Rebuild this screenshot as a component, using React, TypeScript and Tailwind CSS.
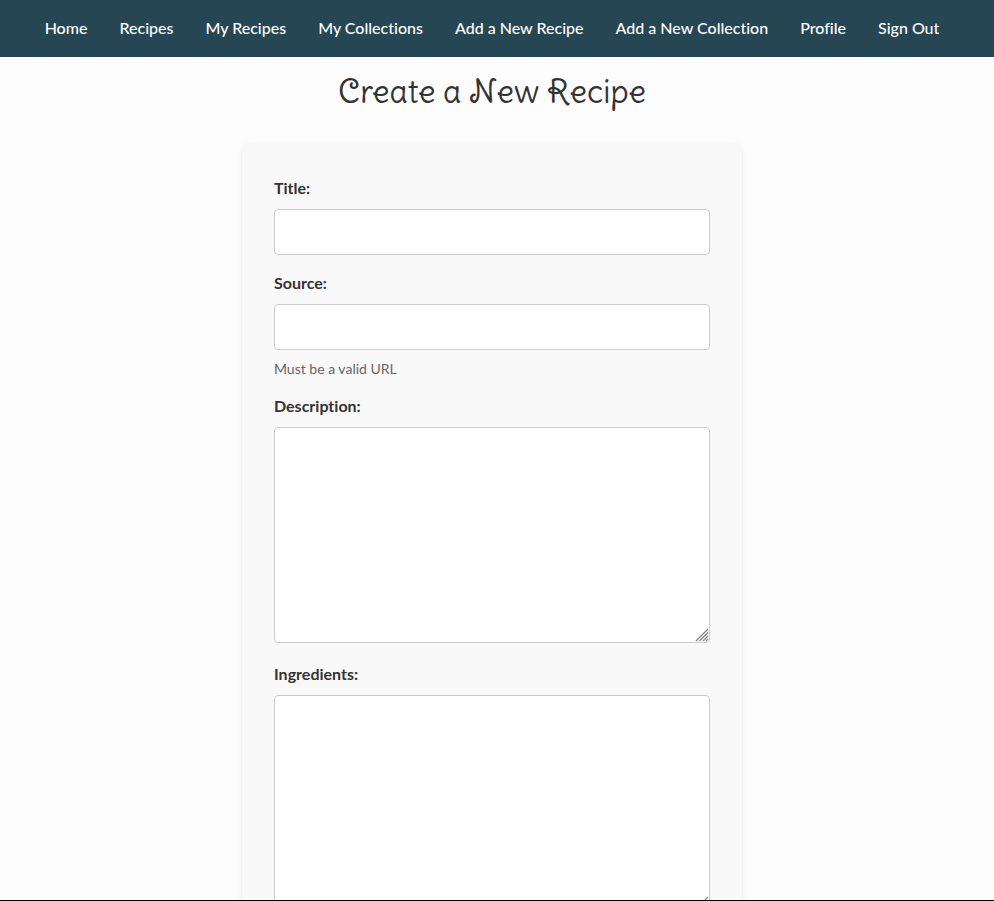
const links = [
  "Home",
  "Recipes",
  "My Recipes",
  "My Collections",
  "Add a New Recipe",
  "Add a New Collection",
  "Profile",
  "Sign Out",
];

const control =
  "block w-full rounded border border-[#ccc] bg-white px-3 text-base outline-none";

const labelText = "mb-2 block leading-[27px] font-bold";

function ResizeGrip() {
  return (
    <svg
      aria-hidden="true"
      className="pointer-events-none absolute right-px bottom-px size-[14px]"
      viewBox="0 0 14 14"
      fill="none"
      stroke="#858585"
      strokeWidth="1.2"
    >
      <path d="M1 13 13 1M4.5 13l8.5-8.5M8 13l5-5M11 13l2-2" />
    </svg>
  );
}

function Area({ id, label }: { id: string; label: string }) {
  return (
    <div className="mb-[17px]">
      <label htmlFor={id} className={labelText}>
        {label}
      </label>
      <div className="relative">
        <textarea id={id} className={`${control} h-[216px] resize-none py-3`} />
        <ResizeGrip />
      </div>
    </div>
  );
}

export default function App() {
  return (
    <div className="h-screen overflow-hidden border-b border-black bg-[#fdfdfd] font-['Lato',sans-serif] text-base text-[#333] [font-variant-ligatures:no-common-ligatures]">
      <nav className="bg-[#264653] pt-4 pb-[17px]">
        <ul className="flex justify-center gap-8 pr-[10px]">
          {links.map((name) => (
            <li key={name}>
              <a href="#" className="block leading-6 font-medium whitespace-nowrap text-white">
                {name}
              </a>
            </li>
          ))}
        </ul>
      </nav>
      <main className="pr-[26px] pl-4">
        <h1 className="pt-4 pb-[31px] text-center font-['Delius_Swash_Caps','Lato',sans-serif] text-[32px] leading-[38px]">
          Create a New Recipe
        </h1>
        <form className="mx-auto w-full max-w-[500px] rounded-lg bg-[#f9f9f9] p-8 shadow-md">
          <div className="mb-[14px]">
            <label htmlFor="title" className={labelText}>Title:</label>
            <input id="title" type="text" className={`${control} h-[46px]`} />
          </div>
          <div className="mb-[14px]">
            <label htmlFor="source" className={labelText}>Source:</label>
            <input id="source" type="url" aria-describedby="source-help" className={`${control} h-[46px]`} />
            <p id="source-help" className="mt-[10px] text-sm leading-[18px] text-[#666]">Must be a valid URL</p>
          </div>
          <Area id="description" label="Description:" />
          <Area id="ingredients" label="Ingredients:" />
        </form>
      </main>
    </div>
  );
}
